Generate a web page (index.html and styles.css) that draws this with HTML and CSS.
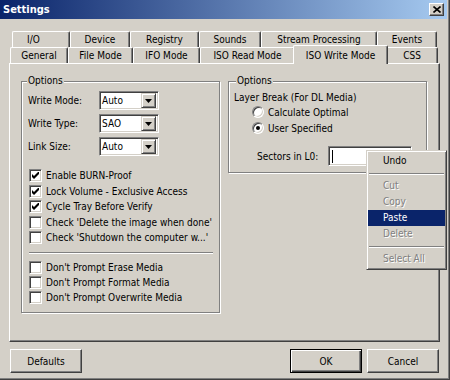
FILE: index.html
```html
<!DOCTYPE html>
<html lang="en">
  <head>
    <meta charset="UTF-8" />
    <title>Settings</title>
    <link rel="stylesheet" href="styles.css">
  </head>
  <body>
    <div class="window">
      <div class="titlebar">
        <span class="titlebar__text">Settings</span>
        <span class="titlebar__close">
          <svg width="8" height="7" viewBox="0 0 8 7"><path d="M0.5 0.5 L7.5 6.5 M7.5 0.5 L0.5 6.5" stroke="#000" stroke-width="1.6" fill="none"/></svg>
        </span>
      </div>

      <div class="tabs">
        <div class="tab-row tab-row--back">
          <div class="tab tab--io">I/O</div>
          <div class="tab">Device</div>
          <div class="tab">Registry</div>
          <div class="tab">Sounds</div>
          <div class="tab">Stream Processing</div>
          <div class="tab">Events</div>
        </div>
        <div class="tab-row tab-row--front">
          <div class="tab">General</div>
          <div class="tab">File Mode</div>
          <div class="tab">IFO Mode</div>
          <div class="tab">ISO Read Mode</div>
          <div class="tab tab--active">ISO Write Mode</div>
          <div class="tab">CSS</div>
        </div>
      </div>

      <div class="panel">
        <div class="group group--left">
          <div class="group__legend">Options</div>

          <div class="field field--first">
            <span class="field__label">Write Mode:</span>
            <div class="combo">
              <span class="combo__value">Auto</span>
              <span class="combo__btn"><svg width="7" height="4" viewBox="0 0 7 4"><path d="M0 0 H7 L3.5 4 Z" fill="#000"/></svg></span>
            </div>
          </div>
          <div class="field">
            <span class="field__label">Write Type:</span>
            <div class="combo">
              <span class="combo__value">SAO</span>
              <span class="combo__btn"><svg width="7" height="4" viewBox="0 0 7 4"><path d="M0 0 H7 L3.5 4 Z" fill="#000"/></svg></span>
            </div>
          </div>
          <div class="field">
            <span class="field__label">Link Size:</span>
            <div class="combo">
              <span class="combo__value">Auto</span>
              <span class="combo__btn"><svg width="7" height="4" viewBox="0 0 7 4"><path d="M0 0 H7 L3.5 4 Z" fill="#000"/></svg></span>
            </div>
          </div>

          <div class="checks checks--first">
            <div class="check"><span class="check__box"><svg width="7" height="7" viewBox="0 0 7 7"><path d="M0 2 L0 5 L2 7 L7 2 L7 -1 L2 4 Z" fill="#000"/></svg></span>Enable BURN-Proof</div>
            <div class="check"><span class="check__box"><svg width="7" height="7" viewBox="0 0 7 7"><path d="M0 2 L0 5 L2 7 L7 2 L7 -1 L2 4 Z" fill="#000"/></svg></span>Lock Volume - Exclusive Access</div>
            <div class="check"><span class="check__box"><svg width="7" height="7" viewBox="0 0 7 7"><path d="M0 2 L0 5 L2 7 L7 2 L7 -1 L2 4 Z" fill="#000"/></svg></span>Cycle Tray Before Verify</div>
            <div class="check"><span class="check__box"></span>Check 'Delete the image when done'</div>
            <div class="check"><span class="check__box"></span>Check 'Shutdown the computer w...'</div>
          </div>

          <div class="separator"></div>

          <div class="checks checks--second">
            <div class="check"><span class="check__box"></span>Don't Prompt Erase Media</div>
            <div class="check"><span class="check__box"></span>Don't Prompt Format Media</div>
            <div class="check"><span class="check__box"></span>Don't Prompt Overwrite Media</div>
          </div>
        </div>

        <div class="group group--right">
          <div class="group__legend">Options</div>
          <div class="layer-title">Layer Break (For DL Media)</div>
          <div class="radio"><span class="radio__dot"></span>Calculate Optimal</div>
          <div class="radio"><span class="radio__dot is-on"></span>User Specified</div>
          <div class="sectors">
            <span class="sectors__label">Sectors in L0:</span>
            <span class="edit"><span class="edit__caret"></span></span>
          </div>
        </div>
      </div>

      <div class="buttons">
        <button class="btn">Defaults</button>
        <button class="btn btn--default">OK</button>
        <button class="btn btn--cancel">Cancel</button>
      </div>

      <!-- context menu of the Sectors edit box -->
      <div class="menu">
        <div class="menu__item">Undo</div>
        <div class="menu__sep"></div>
        <div class="menu__item is-disabled">Cut</div>
        <div class="menu__item is-disabled">Copy</div>
        <div class="menu__item is-active">Paste</div>
        <div class="menu__item is-disabled">Delete</div>
        <div class="menu__sep"></div>
        <div class="menu__item is-disabled">Select All</div>
      </div>
    </div>
  </body>
</html>
```

FILE: styles.css
```css
* {
  box-sizing: border-box;
}

body {
  margin: 0;
  background: #d4d0c8;
  font-family: "DejaVu Sans Condensed", "Liberation Sans", sans-serif;
  font-size: 10px;
  color: #000;
}

.window {
  position: relative;
  width: 450px;
  height: 380px;
  background: #d4d0c8;
  box-shadow: inset -1px -1px 0 #404040, inset -2px -2px 0 #808080;
  overflow: hidden;
}

/* title bar */
.titlebar {
  width: 447px;
  height: 19px;
  padding: 0 3px 0 3px;
  display: flex;
  align-items: center;
  justify-content: space-between;
  background: linear-gradient(to right, #0a246a, #a6caf0);
}

.titlebar__text {
  color: #fff;
  font-weight: bold;
  font-size: 11px;
}

.titlebar__close {
  width: 15px;
  height: 13px;
  display: flex;
  align-items: center;
  justify-content: center;
  background: #d4d0c8;
  border: 1px solid;
  border-color: #fff #404040 #404040 #fff;
  box-shadow: inset -1px -1px 0 #808080;
}

/* tabs */
.tabs {
  margin-top: 12px;
  height: 32px;
}

.tab-row {
  display: grid;
  height: 16px;
}

.tab-row--back {
  margin-left: 12px;
  grid-template-columns: 58px 60px 69px 62px 116px 60px;
}

.tab-row--front {
  margin-left: 10px;
  grid-template-columns: 58px 65px 67px 95px 91px 52px;
}

.tab {
  display: flex;
  align-items: center;
  justify-content: center;
  border-top: 1px solid #fff;
  border-left: 1px solid #fff;
  border-right: 1px solid #404040;
  border-radius: 2px 2px 0 0;
  box-shadow: inset -1px 0 0 #808080;
  background: #d4d0c8;
  white-space: nowrap;
}

.tab--io {
  justify-content: flex-start;
  padding-left: 14px;
}

.tab--active {
  position: relative;
  z-index: 2;
  margin: -2px -2px -1px -2px;
}

/* panel */
.panel {
  margin-left: 9px;
  width: 431px;
  height: 279px;
  border: 1px solid;
  border-color: #fff #404040 #404040 #fff;
  box-shadow: inset -1px -1px 0 #808080;
  padding: 17px 0 0 11px;
  display: flex;
  align-items: flex-start;
  gap: 8px;
}

.group {
  width: 199px;
  border: 1px solid #808080;
  box-shadow: 1px 1px 0 #fff, inset 1px 1px 0 #fff;
}

.group--left {
  height: 232px;
  padding: 0 6px;
}

.group--right {
  height: 92px;
  padding: 0 5px;
}

.group__legend {
  width: fit-content;
  height: 12px;
  line-height: 12px;
  margin-top: -7px;
  padding: 0 1px;
  background: #d4d0c8;
}

.group--left .group__legend {
  margin-left: -1px;
}

.group--right .group__legend {
  margin-left: 2px;
}

/* combo rows */
.field {
  display: flex;
  align-items: center;
  height: 19px;
  margin-bottom: 4px;
}

.field--first {
  margin-top: 4px;
}

.field__label {
  width: 71px;
}

.combo {
  width: 60px;
  height: 19px;
  display: flex;
  align-items: center;
  justify-content: space-between;
  background: #fff;
  border: 1px solid;
  border-color: #808080 #fff #fff #808080;
  box-shadow: inset 1px 1px 0 #404040, inset -1px -1px 0 #d4d0c8;
  padding: 2px 2px 2px 2px;
}

.combo__btn {
  width: 15px;
  height: 15px;
  display: flex;
  align-items: center;
  justify-content: center;
  background: #d4d0c8;
  border: 1px solid;
  border-color: #d4d0c8 #404040 #404040 #d4d0c8;
  box-shadow: inset 1px 1px 0 #fff, inset -1px -1px 0 #808080;
}

/* checkboxes */
.checks--first {
  margin-top: 12px;
}

.checks--first .check {
  height: 15.5px;
}

.check {
  display: flex;
  align-items: center;
  height: 15px;
  white-space: nowrap;
}

.check__box {
  width: 13px;
  height: 13px;
  margin: 0 4px 0 1px;
  flex: none;
  display: flex;
  align-items: center;
  justify-content: center;
  background: #fff;
  border: 1px solid;
  border-color: #808080 #fff #fff #808080;
  box-shadow: inset 1px 1px 0 #404040, inset -1px -1px 0 #d4d0c8;
}

.separator {
  height: 2px;
  margin: 6px 0 6px 1px;
  border-top: 1px solid #808080;
  border-bottom: 1px solid #fff;
}

/* right group */
.layer-title {
  margin-top: 5px;
  height: 12px;
  line-height: 12px;
}

.radio {
  display: flex;
  align-items: center;
  height: 16px;
  padding-left: 18px;
}

.radio__dot {
  width: 12px;
  height: 12px;
  margin-right: 4px;
  border-radius: 50%;
  background: #fff;
  border: 1px solid;
  border-color: #808080 #fff #fff #808080;
  box-shadow: inset 1px 1px 0 #404040, inset -1px -1px 0 #d4d0c8;
  display: flex;
  align-items: center;
  justify-content: center;
}

.radio__dot.is-on::after {
  content: "";
  width: 4px;
  height: 4px;
  border-radius: 50%;
  background: #000;
}

.sectors {
  display: flex;
  align-items: center;
  margin-top: 10px;
  padding-left: 23px;
}

.sectors__label {
  width: 71px;
}

.edit {
  width: 84px;
  height: 20px;
  display: flex;
  align-items: center;
  padding-left: 3px;
  background: #fff;
  border: 1px solid;
  border-color: #808080 #fff #fff #808080;
  box-shadow: inset 1px 1px 0 #404040, inset -1px -1px 0 #d4d0c8;
}

.edit__caret {
  width: 1px;
  height: 13px;
  background: #000;
}

/* bottom buttons */
.buttons {
  display: flex;
  margin-top: 7px;
  padding: 0 11px 0 10px;
}

.btn {
  width: 72px;
  height: 24px;
  padding: 0;
  font: inherit;
  color: #000;
  background: #d4d0c8;
  border: 1px solid;
  border-color: #fff #404040 #404040 #fff;
  box-shadow: inset -1px -1px 0 #808080;
}

.btn--default {
  margin-left: auto;
  border-color: #000;
  box-shadow: inset 1px 1px 0 #fff, inset -1px -1px 0 #404040, inset -2px -2px 0 #808080;
}

.btn--cancel {
  margin-left: 5px;
}

/* context menu */
.menu {
  position: absolute;
  left: 366px;
  top: 150px;
  width: 81px;
  padding: 2px 1px;
  background: #d4d0c8;
  border: 1px solid;
  border-color: #d4d0c8 #404040 #404040 #d4d0c8;
  box-shadow: inset 1px 1px 0 #fff, inset -1px -1px 0 #808080;
}

.menu__item {
  height: 16px;
  line-height: 16px;
  padding-left: 15px;
}

.menu__item.is-disabled {
  color: #808080;
  text-shadow: 1px 1px 0 #fff;
}

.menu__item.is-active {
  background: #0a246a;
  color: #fff;
}

.menu__sep {
  height: 2px;
  margin: 4px 1px 3px;
  border-top: 1px solid #808080;
  border-bottom: 1px solid #fff;
}
```
